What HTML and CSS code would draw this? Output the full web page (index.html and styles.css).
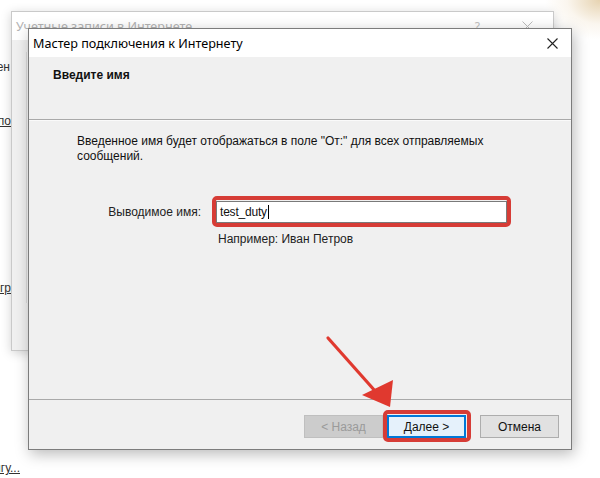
FILE: index.html
```html
<!DOCTYPE html>
<html lang="ru">
<head>
<meta charset="utf-8">
<title>Мастер подключения к Интернету</title>
<link rel="stylesheet" href="styles.css">
</head>
<body>
<div class="page">
  <div class="behind">
    <div class="frag f1"><span>Подключен</span></div>
    <div class="frag f2"><span class="u">Свойства по</span></div>
    <div class="frag f3"><span class="u">Настройка гр</span></div>
    <div class="frag f4"><span class="u">Экспорт в книгу...</span></div>
  </div>

  <div class="win back-win">
    <div class="titlebar dim">
      <span class="title">Учетные записи в Интернете</span>
      <span class="tb-icons"><span class="q">?</span><svg class="x" width="11" height="11" viewBox="0 0 11 11"><path d="M0.5 0.5L10.5 10.5M10.5 0.5L0.5 10.5" stroke="#bbb" stroke-width="1"/></svg></span>
    </div>
    <div class="back-body"><div class="back-panel"></div></div>
  </div>

  <div class="win dialog">
    <div class="titlebar">
      <span class="title">Мастер подключения к Интернету</span>
      <svg class="x" width="11" height="11" viewBox="0 0 11 11"><path d="M0.5 0.5L10.5 10.5M10.5 0.5L0.5 10.5" stroke="#222" stroke-width="1.1"/></svg>
    </div>
    <div class="header">Введите имя</div>
    <div class="content">
      <p class="intro">Введенное имя будет отображаться в поле "От:" для всех отправляемых сообщений.</p>
      <div class="field-row">
        <label class="lbl">Выводимое имя:</label>
        <div class="input hl">test_duty<span class="caret"></span></div>
      </div>
      <div class="hint">Например: Иван Петров</div>
    </div>
    <div class="footer">
      <button class="btn disabled">&lt; Назад</button>
      <button class="btn default hl2">Далее &gt;</button>
      <button class="btn cancel">Отмена</button>
    </div>
  </div>

  <svg class="arrow" width="600" height="478" viewBox="0 0 600 478">
    <line x1="328" y1="338" x2="376" y2="392" stroke="#e0392f" stroke-width="3.2" stroke-linecap="round"/>
    <polygon points="390,407 362,395 393,380" fill="#e0392f"/>
  </svg>
</div>
</body>
</html>
```

FILE: styles.css
```css
html, body {
  margin: 0;
  padding: 0;
}
body {
  width: 600px;
  height: 478px;
  overflow: hidden;
  background: #fff;
  font-family: "Liberation Sans", Arial, sans-serif;
  font-size: 12px;
  color: #111;
}
.page {
  position: relative;
  width: 600px;
  height: 478px;
  overflow: hidden;
  background: radial-gradient(ellipse 55px 40px at 600px 0px, rgba(222,196,150,0.75), rgba(240,225,200,0.3) 60%, rgba(255,255,255,0) 100%), #fff;
}

/* page behind the windows */
.behind {
  display: flex;
  flex-direction: column;
  padding-top: 60px;
  color: #333;
  line-height: 15px;
}
.frag {
  display: flex;
  justify-content: flex-end;
  overflow: hidden;
  white-space: nowrap;
}
.frag .u { text-decoration: underline; }
.f1 { width: 10px; }
.f2 { width: 11px; margin-top: 39px; }
.f3 { width: 11px; margin-top: 152px; }
.f4 { width: 20px; margin-top: 165px; }

/* windows */
.win {
  position: absolute;
  display: flex;
  flex-direction: column;
  box-sizing: border-box;
  background: #f0f0f0;
}
.titlebar {
  display: flex;
  align-items: center;
  justify-content: space-between;
  height: 28px;
  flex: none;
  background: #fff;
  font-family: "Noto Sans", "Open Sans", sans-serif;
  font-size: 12.6px;
  color: #000;
}
.back-win {
  left: 11px;
  top: 11px;
  width: 543px;
  height: 340px;
  border: 1px solid #c9c9c9;
  box-shadow: 0 2px 10px rgba(0,0,0,0.18);
}
.back-win .titlebar { padding: 0 20px 0 4px; }
.titlebar.dim { color: #b3b3b3; }
.tb-icons {
  display: flex;
  align-items: center;
  gap: 42px;
}
.q { font-size: 12px; color: #c0c0c0; }
.back-body {
  flex: 1;
  padding: 12px 0 47px 14px;
  display: flex;
}
.back-panel {
  flex: 1;
  border-left: 1px solid #dcdcdc;
  background: #f5f5f5;
}

.dialog {
  left: 28px;
  top: 28px;
  width: 544px;
  height: 422px;
  border: 1px solid #7c7c7c;
  box-shadow: 2px 4px 14px rgba(0,0,0,0.28);
}
.dialog .titlebar { padding: 0 13px 0 4px; }

.header {
  height: 63px;
  box-sizing: border-box;
  padding: 11px 0 0 24px;
  font-weight: bold;
  line-height: 15px;
  color: #111;
  border-bottom: 1px solid #a9a9a9;
  flex: none;
}
.content {
  flex: 1;
  padding: 13px 0 0 0;
  border-top: 1px solid #fafafa;
}
.intro {
  margin: 0 0 0 48px;
  width: 430px;
  line-height: 15px;
}
.field-row {
  display: flex;
  align-items: center;
  margin-top: 37px;
  gap: 15px;
}
.lbl {
  width: 172px;
  text-align: right;
  color: #222;
}
.input {
  position: relative;
  width: 291px;
  height: 22px;
  box-sizing: border-box;
  background: #fff;
  border: 1px solid #7a7a7a;
  padding: 0 0 0 3px;
  line-height: 20px;
  display: flex;
  align-items: center;
  letter-spacing: -0.2px;
}
.caret {
  display: inline-block;
  width: 1px;
  height: 14px;
  background: #000;
  margin-left: 1px;
}
.hl::after {
  content: "";
  position: absolute;
  left: -5px;
  right: -5px;
  top: -6px;
  bottom: -5px;
  border: 4px solid #d63c36;
  border-radius: 5px;
}
.hint {
  margin: 9px 0 0 189px;
  line-height: 15px;
  color: #222;
}

.footer {
  flex: none;
  height: 50px;
  box-sizing: border-box;
  border-top: 1px solid #a9a9a9;
  display: flex;
  align-items: flex-start;
  padding: 15px 12px 0 0;
  justify-content: flex-end;
}
.btn {
  position: relative;
  width: 79px;
  height: 23px;
  box-sizing: border-box;
  font-family: "Liberation Sans", Arial, sans-serif;
  font-size: 12px;
  background: #e1e1e1;
  border: 1px solid #adadad;
  color: #111;
  padding: 0;
}
.btn.disabled {
  background: #cccccc;
  border-color: #bfbfbf;
  color: #9a9a9a;
}
.btn.default {
  margin-left: 4px;
  border: 2px solid #0078d7;
  background: #e5f1fb;
}
.btn.cancel { margin-left: 14px; }
.hl2::after {
  content: "";
  position: absolute;
  left: -6px;
  right: -7px;
  top: -7px;
  bottom: -6px;
  border: 4px solid #d63c36;
  border-radius: 5px;
}

.arrow {
  position: absolute;
  left: 0;
  top: 0;
  pointer-events: none;
}
```
